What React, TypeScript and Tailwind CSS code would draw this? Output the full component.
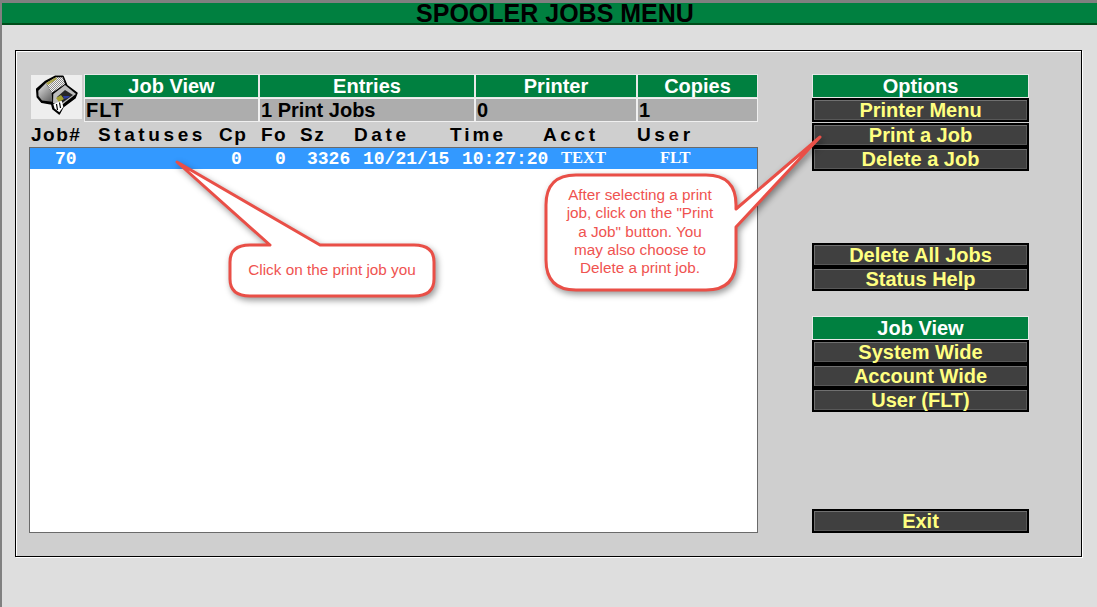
import React from "react";

const sans = "font-['Liberation_Sans',Arial,sans-serif]";

function Head({ children, className = "" }: { children: React.ReactNode; className?: string }) {
  return (
    <div className={`h-[24px] bg-[#008040] border border-[#e8e8e8] flex items-center justify-center text-white font-bold text-[20px] leading-none ${className}`}>
      {children}
    </div>
  );
}

function Btn({ children }: { children: React.ReactNode }) {
  return (
    <div className="h-[24px] bg-[#404040] border-2 border-black shadow-[inset_1px_1px_0_#707070,inset_-1px_-1px_0_#585858] flex items-center justify-center text-[#ffff80] font-bold text-[20px] leading-none">
      {children}
    </div>
  );
}

function Cell({ w, children }: { w: string; children: React.ReactNode }) {
  return (
    <div className={`${w} h-[24px] bg-[#adadad] border border-[#f0f0f0] flex items-center pl-[1px] text-black font-bold text-[20px] leading-none`}>
      {children}
    </div>
  );
}

function PrinterIcon() {
  return (
    <svg width="51" height="44" viewBox="0 0 51 44" className="shrink-0 bg-[#eeeeee]">
      <defs>
        <pattern id="stip" width="2" height="2" patternUnits="userSpaceOnUse">
          <rect width="2" height="2" fill="#f4f4f4" />
          <rect width="1" height="1" fill="#8e8e8e" />
          <rect x="1" y="1" width="1" height="1" fill="#8e8e8e" />
        </pattern>
        <linearGradient id="face" x1="0" y1="0" x2="0.7" y2="1">
          <stop offset="0" stopColor="#e8e8e8" />
          <stop offset="1" stopColor="#6c6c6c" />
        </linearGradient>
      </defs>
      <path d="M5.7 14 L14 6.7 L24 1.3 L32 1.3 L36 10.7 L46 18 L44 23 L32 32 L28.3 39 L22 34 L20.7 29 L10.7 27.3 L6.3 22 Z" fill="#000" stroke="#000" strokeWidth="1.5" strokeLinejoin="round" />
      <path d="M7.3 15.7 L15 8 L20.7 18 L21.3 26.8 L11 25.5 L7.5 21 Z" fill="url(#face)" />
      <path d="M15 8 L25 2.3 L31.7 2.3 L34 9 L20.7 18 Z" fill="url(#stip)" />
      <path d="M15 8 L25 2.3 L26 4 L17 10 Z" fill="#a9a24a" />
      <path d="M22.3 19 L34 10 L45 19 L30.7 30 L22 28 Z" fill="#bdbdbd" />
      <path d="M26 22 L34 15 L42 20 L31 28 Z" fill="#262626" />
      <path d="M25 23 L30 20 L33 24 L28 27 Z" fill="#a4a030" />
      <path d="M32 21 L39 21 L37 23 L33 24 Z" fill="#2c3c9c" />
      <path d="M22.3 29 L30.7 25.7 L32.3 32 L28.3 37.3 L23.5 33.5 Z" fill="#fff" />
      <path d="M25.5 29 L26.5 35 M28.5 27.5 L29.5 33" stroke="#000" strokeWidth="1.2" />
    </svg>
  );
}

const stroke = "#e94f47";

export default function App() {
  return (
    <div className={`relative w-[1097px] h-[607px] overflow-hidden bg-[#dedede] border-l-2 border-t-[3px] border-[#808080] ${sans}`}>
      <div className="h-[22px] bg-[#008040] border-b-2 border-[#004d1a] flex items-center justify-center text-black font-bold text-[25px] leading-none pl-[11px] pt-[1px]">
        SPOOLER JOBS MENU
      </div>

      <div className="ml-[13px] mt-[25px] w-[1067px] h-[507px] bg-[#cfcfcf] border border-black shadow-[inset_1px_1px_0_#fff,1px_1px_0_#fff] flex pt-[23px] pl-[13px]">
        <div className="w-[729px] flex flex-col">
          <div className="flex h-[48px]">
            <div className="w-[51px] ml-[2px] mr-[2px] mt-[1px]">
              <PrinterIcon />
            </div>
            <div className="flex flex-col">
              <div className="flex">
                <Head className="w-[175px]">Job View</Head>
                <Head className="w-[216px]">Entries</Head>
                <Head className="w-[162px]">Printer</Head>
                <Head className="w-[121px]">Copies</Head>
              </div>
              <div className="flex">
                <Cell w="w-[175px]"><span className="tracking-[1px]">FLT</span></Cell>
                <Cell w="w-[216px]">1 Print Jobs</Cell>
                <Cell w="w-[162px]">0</Cell>
                <Cell w="w-[121px]">1</Cell>
              </div>
            </div>
          </div>

          <div className="flex h-[25px] items-center pl-[2px] text-black font-bold text-[19px] leading-none whitespace-pre">
            <span className="w-[67px] tracking-[1.5px]">Job#</span>
            <span className="w-[121px] tracking-[3.6px]">Statuses</span>
            <span className="w-[42px] tracking-[1.5px]">Cp</span>
            <span className="w-[39px] tracking-[1.5px]">Fo</span>
            <span className="w-[54px] tracking-[1.5px]">Sz</span>
            <span className="w-[96px] tracking-[3.6px]">Date</span>
            <span className="w-[93px] tracking-[3px]">Time</span>
            <span className="w-[94px] tracking-[3.6px]">Acct</span>
            <span className="tracking-[3.6px]">User</span>
          </div>

          <div className="h-[386px] bg-white border border-[#6a6a6a]">
            <div className="h-[21px] bg-[#3399ff] flex items-center text-white font-bold text-[18px] leading-none font-['Liberation_Mono',monospace] whitespace-pre">
              <span className="w-[25px]" />
              <span className="w-[176px]">70</span>
              <span className="w-[44px]">0</span>
              <span className="w-[32px]">0</span>
              <span className="w-[56px]">3326</span>
              <span className="w-[99px]">10/21/15</span>
              <span className="w-[99px]">10:27:20</span>
              <span className="w-[99px] font-['Liberation_Serif',serif] text-[16.5px]">TEXT</span>
              <span className="font-['Liberation_Serif',serif] text-[16.5px]">FLT</span>
            </div>
          </div>
        </div>

        <div className="ml-[54px] w-[217px] flex flex-col">
          <Head>Options</Head>
          <Btn>Printer Menu</Btn>
          <div className="h-[1px]" />
          <Btn>Print a Job</Btn>
          <Btn>Delete a Job</Btn>
          <div className="h-[72px]" />
          <Btn>Delete All Jobs</Btn>
          <Btn>Status Help</Btn>
          <div className="h-[25px]" />
          <Head>Job View</Head>
          <Btn>System Wide</Btn>
          <Btn>Account Wide</Btn>
          <Btn>User (FLT)</Btn>
          <div className="h-[97px]" />
          <Btn>Exit</Btn>
        </div>
      </div>

      {/* Callouts lie over the page */}
      <svg
        width="1097"
        height="607"
        viewBox="0 0 1097 607"
        className="absolute left-[-2px] top-[-3px] pointer-events-none drop-shadow-[2px_3px_3px_rgba(0,0,0,0.4)]"
      >
        <path
          d="M177 162 L270 245 L250 245 Q230 245 230 262 L230 279 Q230 296 250 296 L414 296 Q434 296 434 279 L434 262 Q434 245 414 245 L320 245 Z"
          fill="#fff"
          stroke={stroke}
          strokeWidth="3"
          strokeLinejoin="round"
        />
        <path
          d="M576 175 L706 175 Q736 175 736 205 L736 209 L820 137 L736 227 L736 260 Q736 290 706 290 L576 290 Q546 290 546 260 L546 205 Q546 175 576 175 Z"
          fill="#fff"
          stroke={stroke}
          strokeWidth="3"
          strokeLinejoin="round"
        />
      </svg>
      <div className="absolute left-[228px] top-[256px] w-[204px] text-center text-[#ef5350] text-[15.3px] leading-[22px] whitespace-pre">
        Click on the print job you
      </div>
      <div className="absolute left-[543px] top-[183px] w-[190px] text-center text-[#ef5350] text-[15.3px] leading-[18.25px] whitespace-pre">
        After selecting a print
        <br />
        job, click on the "Print
        <br />
        a Job" button. You
        <br />
        may also choose to
        <br />
        Delete a print job.
      </div>
    </div>
  );
}
